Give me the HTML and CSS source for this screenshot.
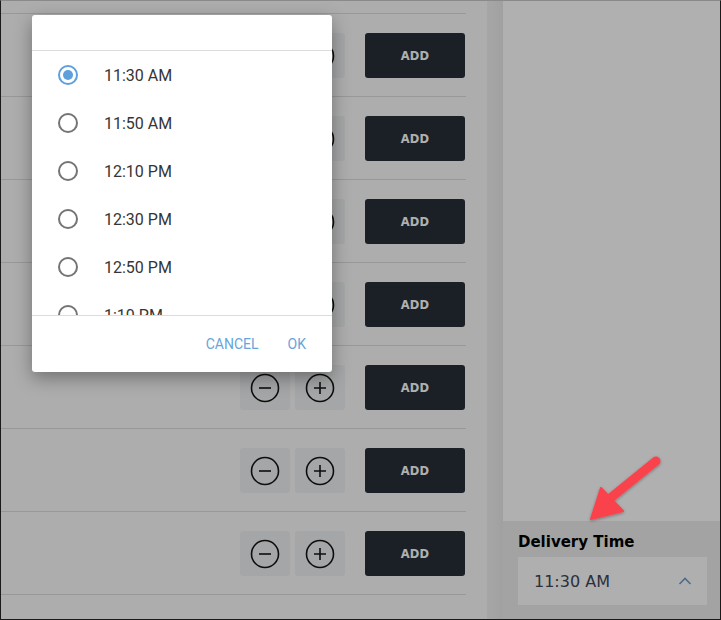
FILE: index.html
```
<!DOCTYPE html>
<html lang="en">
<head>
  <meta charset="UTF-8">
  <title>Menu - Delivery Time</title>
  <link rel="stylesheet" href="styles.css">
</head>
<body>

<div class="screen">
  <div class="page">
    <main class="menu">
      <div class="row">
        <div class="qty">
          <button class="qty-btn"><svg width="30" height="30" viewBox="0 0 30 30"><circle cx="15" cy="15" r="13.5"/><path d="M9 15h12"/></svg></button>
          <button class="qty-btn"><svg width="30" height="30" viewBox="0 0 30 30"><circle cx="15" cy="15" r="13.5"/><path d="M9 15h12M15 9v12"/></svg></button>
        </div>
        <button class="btn-add">ADD</button>
      </div>
      <div class="row">
        <div class="qty">
          <button class="qty-btn"><svg width="30" height="30" viewBox="0 0 30 30"><circle cx="15" cy="15" r="13.5"/><path d="M9 15h12"/></svg></button>
          <button class="qty-btn"><svg width="30" height="30" viewBox="0 0 30 30"><circle cx="15" cy="15" r="13.5"/><path d="M9 15h12M15 9v12"/></svg></button>
        </div>
        <button class="btn-add">ADD</button>
      </div>
      <div class="row">
        <div class="qty">
          <button class="qty-btn"><svg width="30" height="30" viewBox="0 0 30 30"><circle cx="15" cy="15" r="13.5"/><path d="M9 15h12"/></svg></button>
          <button class="qty-btn"><svg width="30" height="30" viewBox="0 0 30 30"><circle cx="15" cy="15" r="13.5"/><path d="M9 15h12M15 9v12"/></svg></button>
        </div>
        <button class="btn-add">ADD</button>
      </div>
      <div class="row">
        <div class="qty">
          <button class="qty-btn"><svg width="30" height="30" viewBox="0 0 30 30"><circle cx="15" cy="15" r="13.5"/><path d="M9 15h12"/></svg></button>
          <button class="qty-btn"><svg width="30" height="30" viewBox="0 0 30 30"><circle cx="15" cy="15" r="13.5"/><path d="M9 15h12M15 9v12"/></svg></button>
        </div>
        <button class="btn-add">ADD</button>
      </div>
      <div class="row">
        <div class="qty">
          <button class="qty-btn"><svg width="30" height="30" viewBox="0 0 30 30"><circle cx="15" cy="15" r="13.5"/><path d="M9 15h12"/></svg></button>
          <button class="qty-btn"><svg width="30" height="30" viewBox="0 0 30 30"><circle cx="15" cy="15" r="13.5"/><path d="M9 15h12M15 9v12"/></svg></button>
        </div>
        <button class="btn-add">ADD</button>
      </div>
      <div class="row">
        <div class="qty">
          <button class="qty-btn"><svg width="30" height="30" viewBox="0 0 30 30"><circle cx="15" cy="15" r="13.5"/><path d="M9 15h12"/></svg></button>
          <button class="qty-btn"><svg width="30" height="30" viewBox="0 0 30 30"><circle cx="15" cy="15" r="13.5"/><path d="M9 15h12M15 9v12"/></svg></button>
        </div>
        <button class="btn-add">ADD</button>
      </div>
      <div class="row">
        <div class="qty">
          <button class="qty-btn"><svg width="30" height="30" viewBox="0 0 30 30"><circle cx="15" cy="15" r="13.5"/><path d="M9 15h12"/></svg></button>
          <button class="qty-btn"><svg width="30" height="30" viewBox="0 0 30 30"><circle cx="15" cy="15" r="13.5"/><path d="M9 15h12M15 9v12"/></svg></button>
        </div>
        <button class="btn-add">ADD</button>
      </div>
      <div class="row"></div>
    </main>

    <div class="gutter"></div>

    <aside class="cart">
      <div class="cart-body"></div>
      <div class="delivery">
        <div class="delivery-label">Delivery Time</div>
        <div class="select">
          <span>11:30 AM</span>
          <svg width="14" height="8" viewBox="0 0 14 8"><path d="M1.5 7L7 1.5 12.5 7"/></svg>
        </div>
      </div>
    </aside>
  </div>

  <!-- затемнение под диалогом -->
  <div class="overlay"></div>

  <div class="dialog">
    <div class="dialog-title"></div>
    <ul class="options">
      <li class="option checked"><span class="radio"></span>11:30 AM</li>
      <li class="option"><span class="radio"></span>11:50 AM</li>
      <li class="option"><span class="radio"></span>12:10 PM</li>
      <li class="option"><span class="radio"></span>12:30 PM</li>
      <li class="option"><span class="radio"></span>12:50 PM</li>
      <li class="option"><span class="radio"></span>1:10 PM</li>
      <li class="option"><span class="radio"></span>1:30 PM</li>
    </ul>
    <div class="dialog-actions">
      <button class="btn-text">CANCEL</button>
      <button class="btn-text">OK</button>
    </div>
  </div>

  <!-- стрелка-указатель -->
  <svg class="callout" width="719" height="618" viewBox="0 0 719 618">
    <defs>
      <filter id="arrowShadow" x="-20%" y="-20%" width="140%" height="140%">
        <feDropShadow dx="0" dy="1" stdDeviation="1.5" flood-color="#000" flood-opacity="0.35"/>
      </filter>
    </defs>
    <g filter="url(#arrowShadow)" fill="#f9434b" stroke="#f9434b">
      <path d="M655 460L607 499" stroke-width="9" stroke-linecap="round" fill="none"/>
      <path d="M590 518L600 487L622 510Z" stroke-width="2" stroke-linejoin="round"/>
    </g>
  </svg>
</div>

</body>
</html>
```

FILE: styles.css
```
* {
  box-sizing: border-box;
}

body {
  margin: 0;
  font-family: 'DejaVu Sans', sans-serif;
  background: #000;
}

.screen {
  position: relative;
  width: 721px;
  height: 620px;
  border: 1px solid #1a1a1a;
  border-top-color: #8a8a8a;
  overflow: hidden;
  background: #fff;
}

.page {
  display: flex;
  height: 100%;
}

/* список блюд */
.menu {
  width: 486px;
  padding: 12px 21px 0 0;
  background: #fbfbfb;
}

.row {
  display: flex;
  align-items: center;
  justify-content: flex-end;
  gap: 20px;
  height: 83px;
  padding: 1px 1px 0 0;
  border-top: 1px solid #dcdcdc;
}

.qty {
  display: flex;
  gap: 5px;
}

.qty-btn {
  width: 50px;
  height: 45px;
  padding: 0;
  border: none;
  border-radius: 3px;
  background: #f0f1f2;
  display: flex;
  align-items: center;
  justify-content: center;
}

.qty-btn svg {
  fill: none;
  stroke: #141414;
  stroke-width: 1.6;
}

.btn-add {
  width: 100px;
  height: 45px;
  border: none;
  border-radius: 3px;
  background: #282e37;
  color: #fff;
  font-family: 'DejaVu Sans', sans-serif;
  font-weight: bold;
  font-size: 11.5px;
  letter-spacing: 0.2px;
}

.gutter {
  width: 16px;
  background: linear-gradient(90deg, #f1f1f1, #ededed 60%, #e8e8e8);
}

/* корзина */
.cart {
  flex: 1;
  display: flex;
  flex-direction: column;
  background: #fff;
}

.cart-body {
  flex: 1;
}

.delivery {
  height: 98px;
  padding: 11px 13px 0 15px;
  background: #ececec;
}

.delivery-label {
  font-weight: bold;
  font-size: 15px;
  line-height: 20px;
  color: #000;
  margin-bottom: 5px;
}

.select {
  height: 48px;
  padding: 0 15px 0 16px;
  display: flex;
  align-items: center;
  justify-content: space-between;
  background: #fefefe;
  color: #3f4756;
  font-size: 16px;
}

.select svg {
  fill: none;
  stroke: #6f9ccd;
  stroke-width: 1.6;
}

.overlay {
  position: absolute;
  inset: 0;
  background: rgba(0, 0, 0, 0.31);
}

/* диалог выбора времени */
.dialog {
  position: absolute;
  left: 31px;
  top: 14px;
  width: 300px;
  height: 357px;
  background: #fff;
  border-radius: 3px;
  box-shadow: 0 6px 18px rgba(0, 0, 0, 0.35);
  display: flex;
  flex-direction: column;
  font-family: Roboto, sans-serif;
}

.dialog-title {
  height: 36px;
  border-bottom: 1px solid #dcdcdc;
}

.options {
  list-style: none;
  margin: 0;
  padding: 0;
  height: 265px;
  overflow: hidden;
  border-bottom: 1px solid #dcdcdc;
}

.option {
  display: flex;
  align-items: center;
  gap: 26px;
  height: 48px;
  padding-left: 26px;
  font-size: 16px;
  color: #353535;
}

.radio {
  width: 20px;
  height: 20px;
  border: 2px solid #747474;
  border-radius: 50%;
  display: flex;
  align-items: center;
  justify-content: center;
}

.option.checked .radio {
  border-color: #5da0db;
}

.option.checked .radio::after {
  content: '';
  width: 10px;
  height: 10px;
  border-radius: 50%;
  background: #5da0db;
}

.dialog-actions {
  flex: 1;
  display: flex;
  align-items: center;
  justify-content: flex-end;
  gap: 13px;
  padding: 0 18px 0 0;
}

.btn-text {
  border: none;
  background: none;
  padding: 6px 8px;
  font-family: Roboto, sans-serif;
  font-size: 14px;
  color: #67a5da;
}

.callout {
  position: absolute;
  left: 0;
  top: 0;
  pointer-events: none;
}
```
